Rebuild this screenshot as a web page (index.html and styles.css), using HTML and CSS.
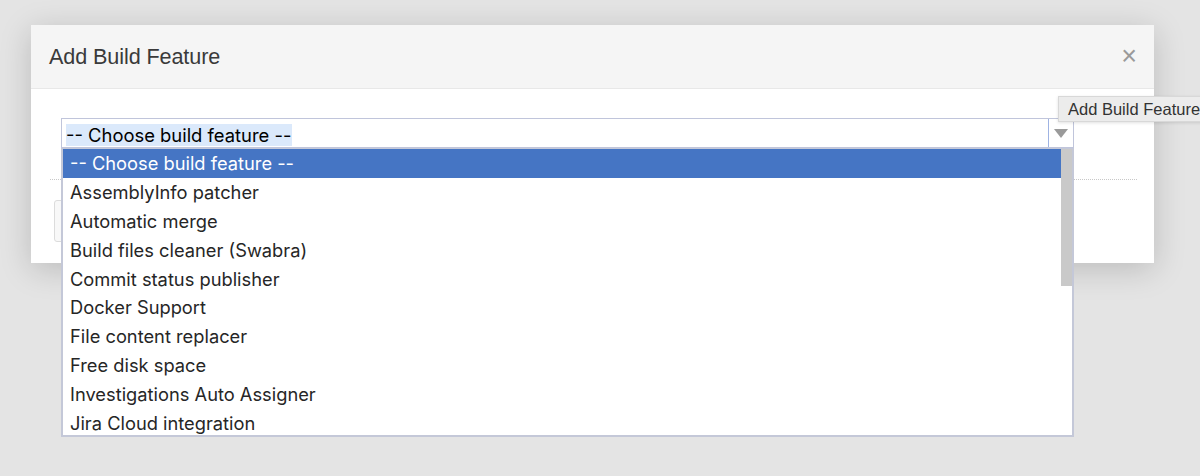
FILE: index.html
```html
<!DOCTYPE html>
<html>
<head>
<meta charset="utf-8">
<link rel="stylesheet" href="styles.css">
</head>
<body>
<div class="dialog">
  <div class="dlg-head">
    <span class="dlg-title">Add Build Feature</span>
    <span class="dlg-close">&#215;</span>
  </div>
  <div class="dlg-body">
    <div class="select">
      <span class="select-text"><span class="sel-hl">-- Choose build feature --</span></span>
      <span class="select-arrow"><svg width="14" height="9" viewBox="0 0 14 9"><path d="M0 0 H14 L7 9 Z" fill="#9a9a9a"/></svg></span>
    </div>
    <div class="sep"></div>
    <div class="btn-row"><span class="btn"></span></div>
  </div>
</div>

<div class="droplist">
  <div class="items">
    <div class="item active">-- Choose build feature --</div>
    <div class="item">AssemblyInfo patcher</div>
    <div class="item">Automatic merge</div>
    <div class="item">Build files cleaner (Swabra)</div>
    <div class="item">Commit status publisher</div>
    <div class="item">Docker Support</div>
    <div class="item">File content replacer</div>
    <div class="item">Free disk space</div>
    <div class="item">Investigations Auto Assigner</div>
    <div class="item">Jira Cloud integration</div>
  </div>
  <div class="scroll"><div class="thumb"></div></div>
</div>

<div class="tooltip">Add Build Feature</div>
</body>
</html>
```

FILE: styles.css
```css
html, body {
  margin: 0;
  padding: 0;
}
body {
  width: 1200px;
  height: 476px;
  overflow: hidden;
  background: #e4e4e4;
  font-family: Inter, "Liberation Sans", sans-serif;
  position: relative;
}
.dialog {
  margin: 25px 0 0 31px;
  width: 1123px;
  height: 238px;
  background: #fff;
  box-shadow: 0 6px 30px rgba(0,0,0,0.18);
  display: flex;
  flex-direction: column;
}
.dlg-head {
  background: #f5f5f5;
  border-bottom: 1px solid #e8e8e8;
  display: flex;
  align-items: center;
  justify-content: space-between;
  padding: 0 17px 0 18px;
  box-sizing: border-box;
  height: 64px;
}
.dlg-title {
  font-family: "Liberation Sans", Arial, sans-serif;
  font-size: 21.6px;
  color: #3a3a3a;
  letter-spacing: -0.1px;
  margin-top: 1px;
}
.dlg-close {
  font-family: "Liberation Sans", Arial, sans-serif;
  font-size: 27px;
  line-height: 1;
  color: #9a9a9a;
  margin-top: 0px;
}
.dlg-body {
  padding: 29px 17px 0 19px;
  display: flex;
  flex-direction: column;
}
.select {
  margin-left: 11px;
  width: 1013px;
  height: 30px;
  box-sizing: border-box;
  border: 1px solid #c0c5db;
  display: flex;
  align-items: stretch;
}
.select-text {
  flex: 1;
  padding: 5px 0 0 4px;
  font-size: 18.4px;
  color: #000;
  line-height: 22px;
}
.sel-hl {
  background: #dbe9fb;
  padding: 0 1px 0 0;
  display: inline-block;
}
.select-arrow {
  width: 24px;
  border-left: 1px solid #9fb3e3;
  display: flex;
  align-items: center;
  justify-content: center;
}
.sep {
  margin-top: 31px;
  width: 1087px;
  border-top: 1px dotted #c8c8c8;
}
.btn-row {
  margin-top: 20px;
  display: flex;
}
.btn {
  margin-left: 4px;
  width: 60px;
  height: 42px;
  box-sizing: border-box;
  border: 1px solid #dcdcdc;
  border-radius: 3px;
  background: #f8f8f8;
}
.droplist {
  position: absolute;
  left: 61px;
  top: 148px;
  width: 1013px;
  height: 289px;
  box-sizing: border-box;
  background: #fff;
  border: 2px solid #c4c8d8;
  border-top: 1px solid #c4c8d8;
  display: flex;
}
.items {
  flex: 1;
  display: flex;
  flex-direction: column;
}
.item {
  height: 28.8px;
  flex: none;
  display: flex;
  align-items: center;
  padding-left: 7px;
  font-size: 18.3px;
  color: #262626;
  white-space: nowrap;
}
.item.active {
  background: #4575c4;
  color: #fff;
}
.scroll {
  width: 11px;
}
.thumb {
  height: 137px;
  background: #c9c9c9;
}
.tooltip {
  position: absolute;
  left: 1058px;
  top: 96px;
  height: 26px;
  padding: 0 10px 0 9px;
  box-sizing: border-box;
  background: #ececec;
  border: 1px solid #d8d8d8;
  box-shadow: 0 1px 3px rgba(0,0,0,0.12);
  font-family: "Liberation Sans", Arial, sans-serif;
  font-size: 16.5px;
  color: #333;
  display: flex;
  align-items: center;
  white-space: nowrap;
}
```
